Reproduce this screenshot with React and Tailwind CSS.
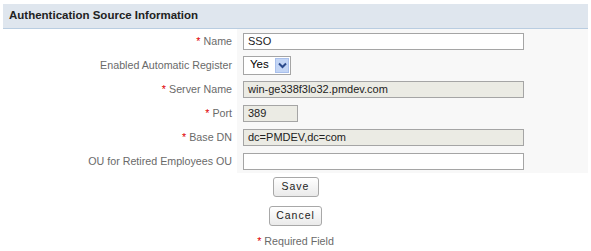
import React from 'react';

const Req = () => <span className="text-[#e00000] mr-[3px]">*</span>;

const rows = [
  { label: 'Name', req: true, value: 'SSO', w: 'w-[281px]' },
  { label: 'Enabled Automatic Register', select: true },
  { label: 'Server Name', req: true, value: 'win-ge338f3lo32.pmdev.com', w: 'w-[281px]', ro: true },
  { label: 'Port', req: true, value: '389', w: 'w-[55px]', ro: true },
  { label: 'Base DN', req: true, value: 'dc=PMDEV,dc=com', w: 'w-[281px]', ro: true },
  { label: 'OU for Retired Employees OU', value: '', w: 'w-[281px]' },
];

const Field = ({ row }) => {
  if (row.select) {
    return (
      <div className="flex items-center h-[19px] w-[48px] border border-[#a5a5a5] bg-white">
        <span className="flex-1 pl-[6px] text-[11.5px] text-black">Yes</span>
        <span className="w-[14px] h-[15px] mr-[1px] bg-[#c3d5f5] border border-[#a9c0ec] flex items-center justify-center">
          <svg width="9" height="7" viewBox="0 0 9 7">
            <path d="M1 1.5 L4.5 5 L8 1.5" fill="none" stroke="#2b4a8c" strokeWidth="2" />
          </svg>
        </span>
      </div>
    );
  }
  return (
    <div
      className={`${row.w} h-[17px] border border-[#a5a5a5] flex items-center pl-[4px] text-[11px] text-[#222] ${row.ro ? 'bg-[#ebebe4]' : 'bg-white'}`}
    >
      {row.value}
    </div>
  );
};

export default function App() {
  return (
    <div className="bg-white w-[591px] h-[251px] pt-[4px] px-[3px] font-['Liberation_Sans',Arial,sans-serif]">
      <div className="h-[25px] bg-[#dfe6ee] border-b border-[#b9cde1] flex items-center pl-[6px] text-[11.5px] font-bold text-[#222]">
        Authentication Source Information
      </div>
      <div className="grid grid-cols-[234px_1fr]">
        {rows.map((r, i) => (
          <React.Fragment key={i}>
            <div className="h-[24px] flex items-center justify-end pr-[5px] text-[10.7px] text-[#6a6a6a]">
              {r.req && <Req />}
              {r.label}
            </div>
            <div className="h-[24px] flex items-center pl-[6px] bg-[#f8f8f8]">
              <Field row={r} />
            </div>
          </React.Fragment>
        ))}
      </div>
      <div className="flex flex-col items-center pt-[4px]">
        <button className="h-[20px] w-[46px] rounded-[3px] border border-[#a8a8a8] bg-gradient-to-b from-white to-[#eaeaea] text-[10.5px] font-normal tracking-[1px] text-[#222]">
          Save
        </button>
        <button className="mt-[9px] h-[20px] w-[53px] rounded-[3px] border border-[#a8a8a8] bg-gradient-to-b from-white to-[#eaeaea] text-[10.5px] font-normal tracking-[1px] text-[#222]">
          Cancel
        </button>
        <div className="mt-[7px] text-[10.7px] text-[#6a6a6a]">
          <Req />
          Required Field
        </div>
      </div>
    </div>
  );
}
